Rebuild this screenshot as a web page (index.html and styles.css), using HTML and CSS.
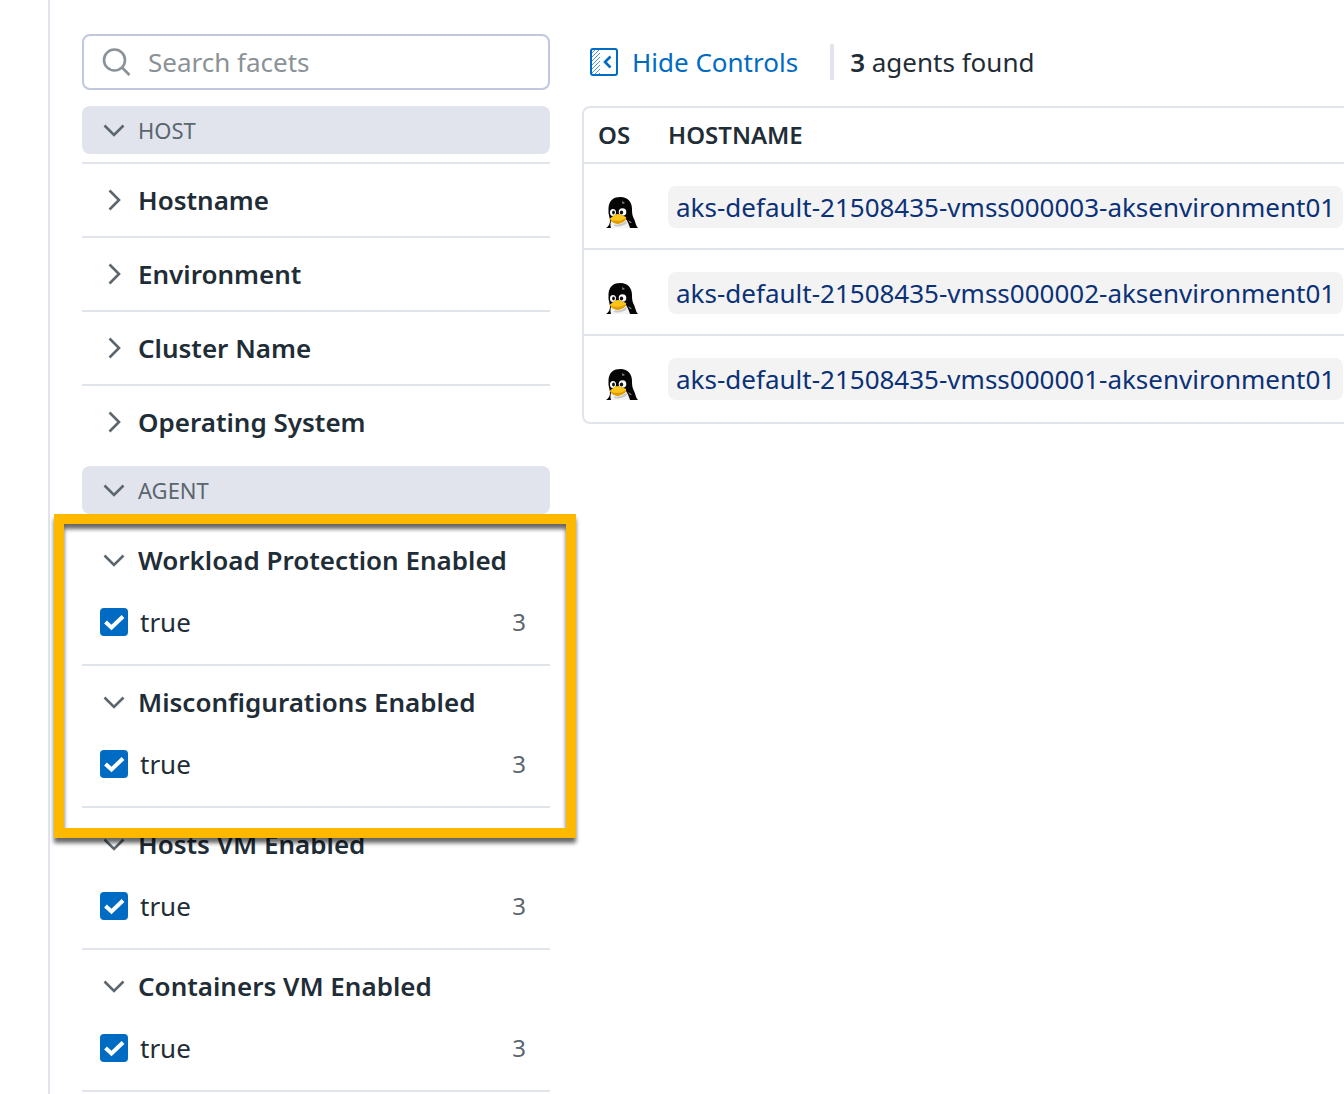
FILE: index.html
```html
<!DOCTYPE html>
<html lang="en">
<head>
<meta charset="utf-8">
<title>Agents</title>
<link rel="stylesheet" href="styles.css">
</head>
<body>
<svg class="sprite" aria-hidden="true">
  <symbol id="chevron" viewBox="0 0 24 24">
    <path d="M2.500 7.500 L12 17 L21.500 7.500" fill="none" stroke="currentColor" stroke-width="2.600"/>
  </symbol>
  <symbol id="tux" viewBox="0 0 32 32">
    <path d="M0 32 C3 30 4 28 4 24 L2.500 17 L2.500 12 C3 4 8 1 14.500 1 C22 1 26 6 26 13 C26 18 26.500 20 28.500 24 C30 28 30 30 32 32 Z" fill="#050505"/>
    <path d="M5 32 C4 29 4.500 26 5.500 23 L20 23 C22 26 23 29 24 32 Z" fill="#f4f4f4"/>
    <path d="M8 28.500 C12 29 16 28 20 25 L21 27 C18 30 12 31 8 30 Z" fill="#c9c9c9"/>
    <ellipse cx="7" cy="16.500" rx="3" ry="3.600" fill="#fff"/>
    <ellipse cx="16.500" cy="16" rx="3.800" ry="3.800" fill="#fff"/>
    <ellipse cx="7.500" cy="16.500" rx="1.400" ry="1.900" fill="#111"/>
    <ellipse cx="15.500" cy="16.500" rx="1.700" ry="1.900" fill="#111"/>
    <path d="M4 22.500 C6 21 8.500 18 11.500 18 C14 18 17 20 20 21 C21 24.500 17 26.500 12 28 C8 27.500 4 25 4 22.500 Z" fill="#fcc419"/>
    <path d="M4.500 23.500 C8 25.500 15 25.500 20 22 C20.500 25 16 27 12 28 C8 27.500 5 25.500 4.500 23.500 Z" fill="#df9c05"/>
    <path d="M16 5 L19 7 L16.500 8 Z M22 24 L26 26.500 L24 27 Z" fill="#8c8c8c"/>
  </symbol>
</svg>

<div class="page">
  <aside class="sidebar">
    <label class="search">
      <svg class="search-icon" viewBox="0 0 30 30" aria-hidden="true">
        <circle cx="12.500" cy="13" r="10.500"/>
        <path d="M20 20.500 L27.500 28"/>
      </svg>
      <input type="text" placeholder="Search facets" aria-label="Search facets">
    </label>

    <section class="group">
      <button class="group-head" type="button" aria-expanded="true"><svg class="chevron"><use href="#chevron"/></svg>HOST</button>
      <div class="facet"><button class="facet-head" type="button"><svg class="chevron closed"><use href="#chevron"/></svg>Hostname</button></div>
      <div class="facet"><button class="facet-head" type="button"><svg class="chevron closed"><use href="#chevron"/></svg>Environment</button></div>
      <div class="facet"><button class="facet-head" type="button"><svg class="chevron closed"><use href="#chevron"/></svg>Cluster Name</button></div>
      <div class="facet"><button class="facet-head" type="button"><svg class="chevron closed"><use href="#chevron"/></svg>Operating System</button></div>
    </section>

    <section class="group">
      <button class="group-head" type="button" aria-expanded="true"><svg class="chevron"><use href="#chevron"/></svg>AGENT</button>
      <div class="highlighted">
        <div class="facet open">
          <button class="facet-head" type="button" aria-expanded="true"><svg class="chevron"><use href="#chevron"/></svg>Workload Protection Enabled</button>
          <label class="option"><input type="checkbox" checked>true<span class="count">3</span></label>
        </div>
        <div class="facet open">
          <button class="facet-head" type="button" aria-expanded="true"><svg class="chevron"><use href="#chevron"/></svg>Misconfigurations Enabled</button>
          <label class="option"><input type="checkbox" checked>true<span class="count">3</span></label>
        </div>
        <div class="highlight-box"></div>
      </div>
      <div class="facet open">
        <button class="facet-head" type="button" aria-expanded="true"><svg class="chevron"><use href="#chevron"/></svg>Hosts VM Enabled</button>
        <label class="option"><input type="checkbox" checked>true<span class="count">3</span></label>
      </div>
      <div class="facet open last">
        <button class="facet-head" type="button" aria-expanded="true"><svg class="chevron"><use href="#chevron"/></svg>Containers VM Enabled</button>
        <label class="option"><input type="checkbox" checked>true<span class="count">3</span></label>
      </div>
    </section>
  </aside>

  <main class="content">
    <div class="toolbar">
      <button class="hide-controls" type="button">
        <svg class="panel-icon" viewBox="0 0 28 28" aria-hidden="true">
          <path d="M2 5 L5 2 M2 9 L9 2 M2 13 L10 5 M2 17 L10 9 M2 21 L10 13 M2 25 L10 17 M4 27 L10 21 M8 27 L10 25" stroke-width="1" stroke-opacity="0.700"/>
          <rect x="1" y="1" width="26" height="26" rx="2" stroke-width="2"/>
          <path d="M20.500 8.500 L15 14 L20.500 19.500" stroke-width="2.600"/>
        </svg>
        Hide Controls
      </button>
      <p class="found"><strong>3</strong> agents found</p>
    </div>

    <div class="table-wrap">
      <table>
        <thead>
          <tr><th class="os">OS</th><th>HOSTNAME</th></tr>
        </thead>
        <tbody>
          <tr>
            <td class="os"><svg class="tux" role="img" aria-label="Linux"><use href="#tux"/></svg></td>
            <td><span class="host">aks-default-21508435-vmss000003-aksenvironment01</span></td>
          </tr>
          <tr>
            <td class="os"><svg class="tux" role="img" aria-label="Linux"><use href="#tux"/></svg></td>
            <td><span class="host">aks-default-21508435-vmss000002-aksenvironment01</span></td>
          </tr>
          <tr>
            <td class="os"><svg class="tux" role="img" aria-label="Linux"><use href="#tux"/></svg></td>
            <td><span class="host">aks-default-21508435-vmss000001-aksenvironment01</span></td>
          </tr>
        </tbody>
      </table>
    </div>
  </main>
</div>
</body>
</html>
```
FILE: styles.css
```css
* {
  box-sizing: border-box;
}

body {
  margin: 0;
  background: #fff;
  color: #1f2d37;
  font-family: "Noto Sans", sans-serif;
  font-size: 26px;
  line-height: 36px;
  overflow: hidden;
}

button, input {
  font: inherit;
  color: inherit;
}

button {
  display: flex;
  align-items: center;
  padding: 0;
  border: none;
  background: none;
  text-align: left;
  cursor: pointer;
}

.sprite {
  display: none;
}

.page {
  display: flex;
  min-height: 100vh;
  margin-left: 48px;
  border-left: 2px solid #e1e4ea;
}

/* facets */
.sidebar {
  flex: 0 0 532px;
  padding: 34px 32px 0;
}

.search {
  display: flex;
  align-items: center;
  gap: 16px;
  height: 56px;
  margin-bottom: 16px;
  padding: 0 18px;
  border: 2px solid #c0c7de;
  border-radius: 8px;
}

.search-icon {
  flex: none;
  width: 30px;
  height: 30px;
  fill: none;
  stroke: #8a9297;
  stroke-width: 2.6;
}

.search input {
  flex: 1;
  min-width: 0;
  padding: 0;
  border: none;
  outline: none;
  background: none;
}

.search input::placeholder {
  color: #8a9297;
  opacity: 1;
}

.group {
  margin-bottom: 8px;
}

.group-head {
  width: 100%;
  height: 48px;
  margin-bottom: 8px;
  padding-left: 20px;
  gap: 12px;
  border-radius: 8px;
  background: #e1e4ed;
  color: #5b666e;
  font-size: 22px;
}

.chevron {
  flex: none;
  width: 24px;
  height: 24px;
  color: #5b666e;
}

.chevron.closed {
  transform: rotate(-90deg);
}

.facet {
  border-top: 2px solid #e1e4ea;
}

.facet-head {
  width: 100%;
  height: 72px;
  padding-left: 20px;
  gap: 12px;
  font-weight: 600;
}

.facet.open {
  padding-bottom: 16px;
}

.facet.last {
  border-bottom: 2px solid #e1e4ea;
}

.option {
  display: flex;
  align-items: center;
  gap: 12px;
  height: 52px;
  padding: 0 24px 0 18px;
}

.option input {
  appearance: none;
  width: 28px;
  height: 28px;
  margin: 0;
  border-radius: 4px;
  background: #006bc2 url("data:image/svg+xml,%3Csvg xmlns='http://www.w3.org/2000/svg' viewBox='0 0 28 28'%3E%3Cpath d='M5.500 14 L11.500 19.500 L23 8.500' fill='none' stroke='%23fff' stroke-width='4'/%3E%3C/svg%3E") center / contain no-repeat;
}

.count {
  margin-left: auto;
  color: #5b666e;
  font-size: 24px;
}

.highlighted {
  position: relative;
}

.highlight-box {
  position: absolute;
  inset: -8px -26px -32px -28px;
  border: 10px solid #fcb900;
  filter: drop-shadow(0 5px 2px rgba(0, 0, 0, 0.6));
  pointer-events: none;
}

/* agents */
.content {
  flex: 1;
  min-width: 0;
  padding-top: 34px;
}

.toolbar {
  display: flex;
  align-items: center;
  height: 56px;
  margin-bottom: 16px;
  padding-left: 8px;
}

.hide-controls {
  gap: 14px;
  color: #006bc2;
}

.panel-icon {
  width: 28px;
  height: 28px;
  fill: none;
  stroke: #006bc2;
}

.found {
  margin: 0 0 0 32px;
  padding-left: 16px;
  border-left: 4px solid #e1e4ed;
}

.found strong {
  font-weight: 600;
}

/* runs on past the right edge */
.table-wrap {
  margin-right: -32px;
  border: 2px solid #e1e4ea;
  border-radius: 8px;
}

table {
  width: 100%;
  border-collapse: separate;
  border-spacing: 0;
}

th {
  height: 54px;
  padding: 0 14px;
  font-size: 24px;
  font-weight: 600;
  text-align: left;
}

td {
  padding: 22px 14px 20px;
  border-top: 2px solid #e1e4ea;
}

tr:last-child td {
  border-bottom: 2px solid transparent;
}

th.os, td.os {
  width: 70px;
}

th.os {
  padding-right: 0;
}

td.os {
  padding-left: 22px;
  vertical-align: bottom;
}

tbody td + td {
  padding-left: 14px;
}

.tux {
  display: block;
  width: 32px;
  height: 32px;
}

.host {
  display: block;
  width: max-content;
  padding: 3px 8px;
  border-radius: 8px;
  background: #f3f3f3;
  color: #0b3177;
}
```
